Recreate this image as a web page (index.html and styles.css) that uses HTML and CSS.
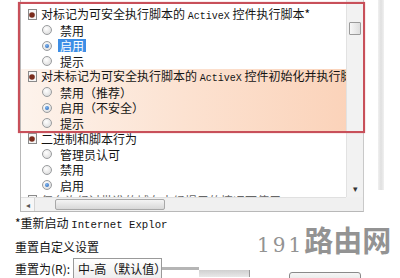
FILE: index.html
```html
<!DOCTYPE html>
<html lang="zh-CN">
<head>
<meta charset="utf-8">
<title>安全设置</title>
<link rel="stylesheet" href="styles.css">
</head>
<body>
<div class="screen">
  <div class="top">
    <div class="listbox">
      <div class="items">
        <div class="row head"><svg class="ico" viewBox="0 0 9 11"><rect x="0.5" y="0.5" width="8" height="10" fill="#f6f6f6" stroke="#8a8a8a"/><circle cx="4" cy="6" r="2.8" fill="#7a2c1c"/></svg><span>对标记为可安全执行脚本的 <span class="lat">ActiveX</span> 控件执行脚本*</span></div>
        <div class="row opt"><span class="radio"></span><span class="lbl">禁用</span></div>
        <div class="row opt"><span class="radio on"></span><span class="lbl sel">启用</span></div>
        <div class="row opt"><span class="radio"></span><span class="lbl">提示</span></div>
        <div class="group-hl">
          <div class="row head"><svg class="ico" viewBox="0 0 9 11"><rect x="0.5" y="0.5" width="8" height="10" fill="#f6f6f6" stroke="#8a8a8a"/><circle cx="4" cy="6" r="2.8" fill="#7a2c1c"/></svg><span>对未标记为可安全执行脚本的 <span class="lat">ActiveX</span> 控件初始化并执行脚本（不安全）</span></div>
          <div class="row opt"><span class="radio"></span><span class="lbl">禁用（推荐）</span></div>
          <div class="row opt"><span class="radio on"></span><span class="lbl">启用（不安全）</span></div>
          <div class="row opt"><span class="radio"></span><span class="lbl">提示</span></div>
        </div>
        <div class="row head"><svg class="ico" viewBox="0 0 9 11"><rect x="0.5" y="0.5" width="8" height="10" fill="#f6f6f6" stroke="#8a8a8a"/><circle cx="4" cy="6" r="2.8" fill="#7a2c1c"/></svg><span>二进制和脚本行为</span></div>
        <div class="row opt"><span class="radio"></span><span class="lbl">管理员认可</span></div>
        <div class="row opt"><span class="radio"></span><span class="lbl">禁用</span></div>
        <div class="row opt"><span class="radio on"></span><span class="lbl">启用</span></div>
        <div class="row head faint"><svg class="ico" viewBox="0 0 9 11"><rect x="0.5" y="0.5" width="8" height="10" fill="#f6f6f6" stroke="#8a8a8a"/><circle cx="4" cy="6" r="2.8" fill="#7a2c1c"/></svg><span>仅允许经过批准的域在未经提示的情况下使用</span></div>
      </div>
      <div class="vscroll">
        <div class="vthumb"></div>
        <div class="vdown">▾</div>
      </div>
      <div class="hscroll">
        <div class="harrow">◂</div>
        <div class="hthumb"></div>
      </div>
      <div class="corner"></div>
    </div>
    <div class="frame-gap"></div>
    <div class="frame-band"></div>
  </div>
  <div class="bottom">
    <div class="line note">*重新启动 <span class="lat2">Internet Explor</span></div>
    <div class="line reset-title">重置自定义设置</div>
    <div class="line reset-row">
      <span>重置为(R):</span>
      <span class="select">中-高（默认值）</span>
      <span class="slider-bar"></span>
      <span class="slider-bar2"></span>
      <span class="btn"></span>
    </div>
  </div>
  <div class="redbox"></div>
  <div class="watermark"><span class="wm-num">191</span>路由网</div>
</div>
</body>
</html>
```
FILE: styles.css
```css
html, body {
  margin: 0;
  padding: 0;
  background: #fff;
}

.screen {
  position: relative;
  width: 400px;
  height: 278px;
  overflow: hidden;
  background: #fff;
  font-family: "Noto Sans CJK SC", "Noto Sans", sans-serif;
  font-size: 12px;
  color: #141414;
}

.top {
  display: flex;
  height: 212px;
  padding-left: 20px;
}

.listbox {
  width: 342px;
  height: 211px;
  border-left: 1px solid #b8b8b8;
  border-bottom: 1px solid #b8b8b8;
  border-right: 1px solid #c9c9c9;
  display: grid;
  grid-template-columns: 1fr 17px;
  grid-template-rows: 1fr 14px;
  background: #fff;
}

.items {
  overflow: hidden;
  padding-top: 7px;
  white-space: nowrap;
}

.row {
  height: 15.5px;
  line-height: 15.5px;
  display: flex;
  align-items: center;
}

.head {
  padding-left: 7px;
}

.ico {
  width: 9px;
  height: 11px;
  margin-right: 4px;
  flex: none;
}

.lat {
  font-family: "Liberation Mono", monospace;
  font-size: 10px;
}

.opt {
  padding-left: 21px;
}

.radio {
  width: 10px;
  height: 10px;
  box-sizing: border-box;
  border: 1px solid #9a9c9e;
  border-radius: 50%;
  background: radial-gradient(circle at 40% 35%, #ffffff 0%, #e6e6e6 60%, #cfd1d3 100%);
  flex: none;
  display: flex;
  align-items: center;
  justify-content: center;
}

.radio.on::after {
  content: "";
  width: 4px;
  height: 4px;
  border-radius: 50%;
  background: radial-gradient(circle at 40% 35%, #7fb4ee, #1f5fb4);
}

.lbl {
  margin-left: 6px;
  padding: 0 2px;
  line-height: 13px;
}

.lbl.sel {
  background: #3d8ee6;
  color: #fff;
}

.group-hl {
  background: linear-gradient(to right, #fdf3ec 0%, #fce2d1 50%, #fbd3ba 100%);
}

.faint {
  color: #666;
}

.vscroll {
  background: #f2f2f2;
  border-left: 1px solid #e2e2e2;
  display: flex;
  flex-direction: column;
  align-items: center;
  padding-top: 22px;
}

.vthumb {
  width: 12px;
  height: 13px;
  box-sizing: border-box;
  border: 1px solid #9a9a9a;
  border-radius: 1px;
  background: linear-gradient(to right, #f7f7f7, #dedede);
}

.vdown {
  margin-top: auto;
  margin-bottom: 3px;
  font-size: 9px;
  line-height: 10px;
  color: #333;
}

.hscroll {
  background: #f0f0f0;
  border-top: 1px solid #e0e0e0;
  display: flex;
  align-items: stretch;
}

.harrow {
  width: 13px;
  font-size: 8px;
  line-height: 13px;
  text-align: center;
  color: #555;
  border-right: 1px solid #d4d4d4;
  background: #f7f7f7;
}

.hthumb {
  margin-left: 20px;
  width: 108px;
  margin-top: 1px;
  margin-bottom: 1px;
  border: 1px solid #a8a8a8;
  border-radius: 2px;
  background: linear-gradient(to bottom, #f4f4f4, #d8d8d8);
}

.corner {
  background: #f0f0f0;
}

.frame-gap {
  width: 14px;
}

.frame-band {
  width: 6px;
  height: 190px;
  background: linear-gradient(to right, #f0f0f0, #e0e0e0, #f0f0f0);
}

.bottom {
  display: flex;
  flex-direction: column;
  padding-left: 15px;
  padding-top: 3px;
}

.line {
  height: 16px;
  line-height: 16px;
  white-space: nowrap;
}

.lat2 {
  font-family: "Liberation Mono", monospace;
  font-size: 10.7px;
}

.reset-title {
  margin-top: 8px;
}

.reset-row {
  margin-top: 4px;
  display: flex;
  align-items: center;
  height: 20px;
}

.select {
  margin-left: 3px;
  width: 83px;
  height: 20px;
  line-height: 20px;
  padding-left: 4px;
  border: 1px solid #9a9a9a;
  background: linear-gradient(to bottom, #ffffff, #ededed);
  box-sizing: content-box;
}

.slider-bar {
  align-self: flex-start;
  margin-top: 8px;
  width: 37px;
  height: 3px;
  background: #b5b5b5;
}

.slider-bar2 {
  align-self: flex-start;
  margin-top: 11px;
  width: 50px;
  height: 7px;
  background: linear-gradient(to bottom, #d0d0d0, #e8e8e8);
  border-right: 1px solid #999;
}

.btn {
  align-self: flex-start;
  margin-top: 13px;
  margin-left: 39px;
  width: 70px;
  height: 14px;
  border: 1px solid #8a8a8a;
  border-radius: 3px;
  background: linear-gradient(to bottom, #f6f6f6, #dcdcdc);
}

.redbox {
  position: absolute;
  left: 18px;
  top: 2px;
  width: 343px;
  height: 127px;
  border: 2px solid #c8505a;
  box-shadow: 0 0 1px #e08890;
}

.watermark {
  position: absolute;
  left: 257px;
  top: 222px;
  font-family: "Noto Sans CJK SC", sans-serif;
  font-weight: 700;
  font-size: 29px;
  line-height: 34px;
  color: #939393;
  white-space: nowrap;
}

.wm-num {
  font-family: "DejaVu Serif", serif;
  font-weight: 400;
  font-size: 20px;
  letter-spacing: 3px;
}
```
